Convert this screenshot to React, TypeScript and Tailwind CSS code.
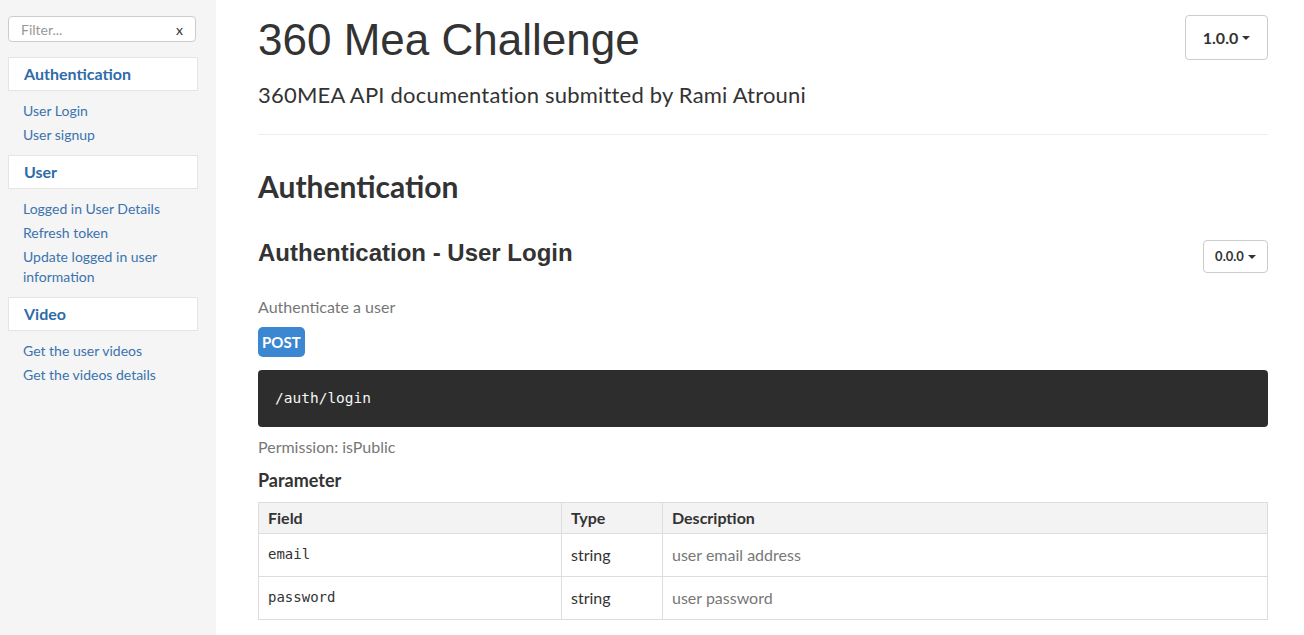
const nav = [
  { title: "Authentication", items: ["User Login", "User signup"] },
  { title: "User", items: ["Logged in User Details", "Refresh token", "Update logged in user information"] },
  { title: "Video", items: ["Get the user videos", "Get the videos details"] },
];

const params = [
  { field: "email", type: "string", desc: "user email address" },
  { field: "password", type: "string", desc: "user password" },
];

function Caret() {
  return <span className="ml-1 inline-block h-0 w-0 border-x-[4px] border-t-[4px] border-x-transparent border-t-[#333] align-middle" />;
}

export default function App() {
  return (
    <div className="flex h-[635px] w-full overflow-hidden bg-white font-['Lato','Open_Sans',sans-serif] text-[#333]">
      <aside className="w-[216px] shrink-0 bg-[#f5f5f5] px-2 pt-4">
        <div className="flex h-[26px] w-[188px] items-center justify-between rounded border border-[#ccc] bg-white pl-3 pr-3 text-[14px]">
          <span className="text-[#999]">Filter...</span>
          <span className="text-[#333]">x</span>
        </div>
        <div className="mt-[15px]">
          {nav.map((g) => (
            <div key={g.title}>
              <div className="flex h-[34px] w-[190px] items-center border border-[#e5e5e5] bg-white px-[15px] text-[16px] font-bold text-[#2d6ca8]">
                {g.title}
              </div>
              <ul className="pt-[8px] pb-[8px]">
                {g.items.map((it) => (
                  <li key={it} className="w-[180px] px-[15px] py-[2px] text-[14px] leading-[20px] text-[#3a73ae]">
                    {it}
                  </li>
                ))}
              </ul>
            </div>
          ))}
        </div>
      </aside>

      <main className="flex-1 pl-[42px] pr-[36px]">
        <div className="flex items-start justify-between pt-[14px]">
          <h1 className="font-['Liberation_Sans',Arial,sans-serif] text-[44px] leading-[52px] text-[#333]">360 Mea Challenge</h1>
          <button className="mt-[1px] flex h-[45px] w-[83px] items-center justify-center rounded border border-[#ccc] bg-white text-[16px] font-bold text-[#333]">
            1.0.0
            <Caret />
          </button>
        </div>
        <p className="mt-[15px] text-[22px] leading-[28px] tracking-[0.2px] text-[#333]">360MEA API documentation submitted by Rami Atrouni</p>
        <hr className="mt-[25px] border-t border-[#eee]" />

        <h2 className="mt-[33px] text-[30px] font-bold leading-[36px] text-[#333]">Authentication</h2>

        <div className="mt-[31px] flex items-start justify-between">
          <h3 className="pt-[3px] font-['Liberation_Sans',Arial,sans-serif] text-[24px] font-bold leading-[30px] text-[#333]">
            Authentication - User Login
          </h3>
          <button className="mt-[5px] flex h-[33px] w-[65px] items-center justify-center rounded border border-[#ccc] bg-white text-[13px] font-bold text-[#333]">
            0.0.0
            <Caret />
          </button>
        </div>

        <p className="mt-[23px] text-[16px] leading-[22px] text-[#777]">Authenticate a user</p>
        <span className="mt-[9px] inline-block rounded-[5px] bg-[#3b87d1] px-[4px] py-[6px] text-[15px] font-bold leading-[18px] text-white">
          POST
        </span>

        <pre className="mt-[13px] flex h-[57px] items-center rounded-[4px] bg-[#2d2d2d] px-[17px] font-['DejaVu_Sans_Mono',monospace] text-[14.5px] text-[#f5f5f5]">
          /auth/login
        </pre>

        <p className="mt-[9px] text-[16px] leading-[22px] text-[#777]">Permission: isPublic</p>
        <h4 className="mt-[11px] text-[18px] font-bold leading-[22px] text-[#333]">Parameter</h4>

        <table className="mt-[11px] w-full border-collapse border border-[#ddd] text-[16px]">
          <thead>
            <tr className="h-[31px] bg-[#f3f3f3] text-left">
              <th className="w-[303px] border border-[#ddd] px-[9px] font-bold">Field</th>
              <th className="w-[101px] border border-[#ddd] px-[9px] font-bold">Type</th>
              <th className="border border-[#ddd] px-[9px] font-bold">Description</th>
            </tr>
          </thead>
          <tbody>
            {params.map((p) => (
              <tr key={p.field} className="h-[43px]">
                <td className="border border-[#ddd] px-[9px] align-top pt-[10px] font-['DejaVu_Sans_Mono',monospace] text-[14px]">{p.field}</td>
                <td className="border border-[#ddd] px-[9px]">{p.type}</td>
                <td className="border border-[#ddd] px-[9px] text-[#777]">{p.desc}</td>
              </tr>
            ))}
          </tbody>
        </table>
      </main>
    </div>
  );
}
